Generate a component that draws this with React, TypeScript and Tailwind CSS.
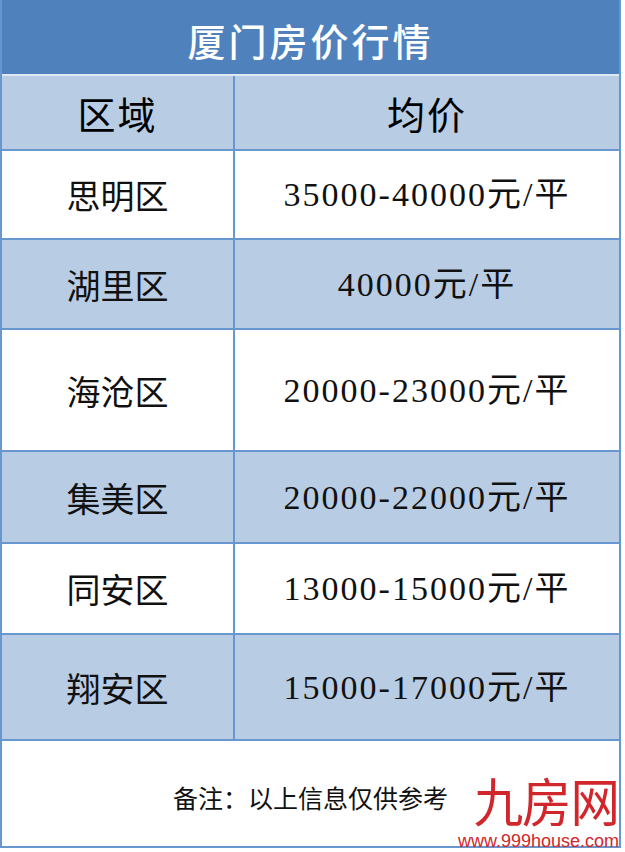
const rows = [
  { area: '思明区', price: '35000-40000元/平', h: 'h-[89px]', band: false },
  { area: '湖里区', price: '40000元/平', h: 'h-[90px]', band: true },
  { area: '海沧区', price: '20000-23000元/平', h: 'h-[122px]', band: false },
  { area: '集美区', price: '20000-22000元/平', h: 'h-[92px]', band: true },
  { area: '同安区', price: '13000-15000元/平', h: 'h-[91px]', band: false },
  { area: '翔安区', price: '15000-17000元/平', h: 'h-[106px]', band: true },
];

export default function App() {
  return (
    <div className="w-[625px] h-[852px] bg-white font-['Noto_Sans_CJK_SC',sans-serif]">
      <div className="relative w-[621px] border-x-2 border-b-2 border-[#6896cf]">
        {/* title */}
        <div className="h-[76px] bg-[#4f81bd] border-b-2 border-[#dfe8f3] flex items-center justify-center pt-1 text-white text-[38px] font-medium tracking-[3px]">
          厦门房价行情
        </div>

        {/* header */}
        <div className="h-[75px] flex bg-[#b8cce4] border-b-2 border-[#6896cf] text-[38px] text-black">
          <div className="w-[233px] border-r-2 border-[#6896cf] flex items-center justify-center tracking-[2px]">区域</div>
          <div className="flex-1 flex items-center justify-center tracking-[2px]">均价</div>
        </div>

        {rows.map((r) => (
          <div
            key={r.area}
            className={`${r.h} flex border-b-2 border-[#6896cf] text-[34px] text-[#111] ${r.band ? 'bg-[#b8cce4]' : 'bg-white'}`}
          >
            <div className="w-[233px] border-r-2 border-[#6896cf] flex items-center justify-center">{r.area}</div>
            <div className="flex-1 flex items-center justify-center tracking-[2px] font-['Liberation_Serif','Noto_Sans_CJK_SC',serif]">
              {r.price}
            </div>
          </div>
        ))}

        {/* footer note */}
        <div className="h-[105px] flex items-center justify-center pt-2 text-[25px] text-[#111]">
          备注：以上信息仅供参考
        </div>

        {/* watermark */}
        <div className="absolute right-0 bottom-[-4px] flex flex-col items-end text-[#d1262b] leading-none">
          <div className="text-[52px] tracking-[-1px] scale-x-95 origin-right mb-[6px]">九房网</div>
          <div className="text-[18px] font-['Liberation_Sans',Arial,sans-serif]">www.999house.com</div>
        </div>
      </div>
    </div>
  );
}
